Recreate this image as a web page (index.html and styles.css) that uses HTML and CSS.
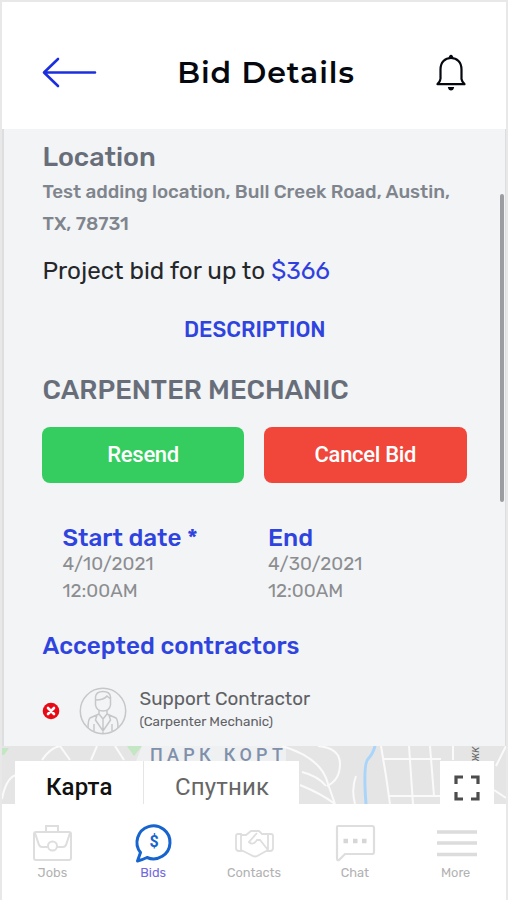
FILE: index.html
```html
<!DOCTYPE html>
<html lang="en">
<head>
<meta charset="utf-8">
<title>Bid Details</title>
<link rel="stylesheet" href="styles.css">
</head>
<body>
<div class="screen">
  <header class="topbar">
    <svg class="back" viewBox="0 0 56 32" width="56" height="32"><path d="M53 16.500H3M16 3L2 16.500L16 30" fill="none" stroke="#1b2fe0" stroke-width="2.600" stroke-linecap="round" stroke-linejoin="round"/></svg>
    <h1 class="title">Bid Details</h1>
    <svg class="bell" viewBox="0 0 34 40" width="34" height="40"><path d="M6.500 26V16.500C6.500 9 11 5 17 5S27.500 9 27.500 16.500V26Q28 29 30.500 31.200H3.500Q6 29 6.500 26" fill="none" stroke="#05080f" stroke-width="2.200" stroke-linejoin="round"/><path d="M14.500 5.500Q15 1.800 17 1.800T19.500 5.500ZM13.800 34H20.200Q19.500 37.500 17 37.500T13.800 34Z" fill="#05080f"/></svg>
  </header>

  <main class="panel">
    <h2 class="heading">Location</h2>
    <p class="address">Test adding location, Bull Creek Road, Austin,<br>TX, 78731</p>
    <p class="bid">Project bid for up to <span class="amount">$366</span></p>
    <h3 class="description">DESCRIPTION</h3>
    <h2 class="heading trade">CARPENTER MECHANIC</h2>
    <div class="actions">
      <button class="btn resend">Resend</button>
      <button class="btn cancel">Cancel Bid</button>
    </div>
    <div class="dates">
      <div class="date"><h3>Start date *</h3><p>4/10/2021</p><p>12:00AM</p></div>
      <div class="date"><h3>End</h3><p>4/30/2021</p><p>12:00AM</p></div>
    </div>
    <h3 class="accepted">Accepted contractors</h3>
    <div class="contractor">
      <svg class="remove" viewBox="0 0 18 18" width="18" height="18"><circle cx="9" cy="9" r="8.300" fill="#e90914"/><path d="M6 6L12 12M12 6L6 12" stroke="#fff" stroke-width="2.600" stroke-linecap="round"/></svg>
      <svg class="avatar" viewBox="0 0 48 48" width="48" height="48" fill="none" stroke="#c6c7c9" stroke-width="1.500"><circle cx="24" cy="24" r="22.700"/><path d="M16.500 13V10Q17 4.500 24 4.500T31.500 10V18Q30.500 24 24 24T16.500 18V13Q25 13 28 9L31.500 12M20 23V27L24 32L28 27V23M20 27L11 31Q9 33 9 41M28 27L37 31Q39 33 39 41M18 28L16.500 33L24 44L31.500 33L30 28M15 37V44M33 37V44M24 32V46"/></svg>
      <div class="who"><div class="name">Support Contractor</div><div class="role">(Carpenter Mechanic)</div></div>
    </div>
    <div class="scroll"></div>
  </main>

  <section class="map">
    <svg class="streets" viewBox="0 0 504 58" width="504" height="58" preserveAspectRatio="none">
      <path fill="#e5e5e5" d="M0 0H504V58H0Z"/>
      <path fill="#c3e6c3" d="M0 2H7L2 9H0ZM125 0H140L132 10Z"/>
      <path fill="#eef0f2" d="M140 0H284V15H134Z"/>
      <path fill="none" stroke="#fafafa" stroke-width="2" d="M0 53Q4 32 14 29M40 14Q48 2 58 0L68 14M95 0L89 14M113 0L122 14M280 0Q320 12 326 38L333 58M316 0Q338 2 338 18T325 40M300 26Q316 30 324 40M298 39Q320 48 333 58M354 30Q349 43 353 58M379 0L384 30L388 58M407 0L411 58M428 0L432 50M451 0V14M382 13H439M386 50H439M494 20L504 0M492 44L504 52"/>
      <path fill="none" stroke="#a9d5fb" stroke-width="3" d="M373 0Q371 8 366 13T364 58"/>
    </svg>
    <div class="park">ПАРК КОРТ</div>
    <div class="road">жк</div>
    <div class="controls">
      <div class="types"><div class="type active">Карта</div><div class="type sat">Спутник</div></div>
      <div class="full"><svg viewBox="0 0 26 26" width="26" height="26"><path d="M2 9V2H9M17 2H24V9M24 17V24H17M9 24H2V17" fill="none" stroke="#4d4d4d" stroke-width="3.200"/></svg></div>
    </div>
  </section>

  <nav class="tabs">
    <div class="tab"><svg viewBox="0 0 42 42" width="42" height="42" fill="none" stroke="#dedede" stroke-width="2"><rect x="3" y="10" width="37" height="28" rx="2"/><path d="M15 10V4H27V10M4 11L8 23Q9 25 11 25H17M39 11L35 23Q34 25 32 25H26"/><circle cx="21.500" cy="24" r="4.500"/></svg><span>Jobs</span></div>
    <div class="tab on"><svg viewBox="0 0 42 42" width="42" height="42"><path d="M5.500 39L8.500 30.500A16.500 16.500 0 1 1 15 35.500Q10 38 5.500 39Z" fill="none" stroke="#1764cf" stroke-width="3" stroke-linejoin="round"/><text x="22" y="25" class="dollar">$</text></svg><span>Bids</span></div>
    <div class="tab"><svg viewBox="0 0 42 42" width="42" height="42" fill="none" stroke="#dedede" stroke-width="1.800"><path d="M8 12H5Q3 12 3 14V26Q3 29 6 29H8ZM35 12H38Q40 12 40 14V26Q40 29 37 29H35ZM8 13H13L18 9H26L29 12H35M8 28L18 33Q22 36 26 33L35 28M24 11L16 20Q20 24 24 18H27L35 28"/></svg><span>Contacts</span></div>
    <div class="tab"><svg viewBox="0 0 42 42" width="42" height="42"><path d="M4 4H38Q40 4 40 6V30Q40 32 38 32H11L5 38Q3 39 3 36V5Q3 4 4 4Z" fill="none" stroke="#dedede" stroke-width="2.200"/><path d="M9.500 19H14M19 19H23.500M28 19H32.500" stroke="#d6d6d6" stroke-width="4.500"/></svg><span>Chat</span></div>
    <div class="tab"><svg viewBox="0 0 42 42" width="42" height="42"><path d="M2 10H42M2 21H42M2 32.500H42" stroke="#dcdcdc" stroke-width="3.600"/></svg><span>More</span></div>
  </nav>
</div>
</body>
</html>
```
FILE: styles.css
```css
* { box-sizing: border-box; margin: 0; padding: 0; }
body { background: #fff; font-family: Rubik, Roboto, "Liberation Sans", sans-serif; }
h1, h2, h3, button { font-weight: 500; }
.screen { position: relative; width: 508px; height: 900px; border: 2px solid #e8e8e8; border-bottom: 0; overflow: hidden; background: #fff; }
.topbar { height: 127px; display: flex; align-items: center; justify-content: space-between; padding: 14px 38px 0 40px; }
.title { font: 600 30px/40px "Montserrat", "Inter", sans-serif; letter-spacing: .98px; color: #05080f; }
.back { margin-top: -2px; }
.panel { position: relative; height: 617px; margin: 0 -2px; padding: 11px 38px 0 38.500px; background: #f2f4f6; border-left: 4px solid #dcdee0; border-right: 3px solid #dcdee0; white-space: nowrap; }
.heading { font-size: 26.900px; line-height: 34px; color: #686e79; }
.address { font-size: 18.850px; line-height: 32px; font-weight: 500; color: #80858d; padding-top: 2px; }
.bid { font-size: 24.250px; line-height: 32px; margin-top: 15px; color: #25272b; }
.amount { color: #3040df; }
.description { text-align: center; font-size: 21.500px; line-height: 28px; margin-top: 29px; color: #2f43df; }
.trade { margin-top: 29px; }
.actions { display: grid; grid-template-columns: 1fr 1fr; gap: 20px; margin: 20px .5px 0 -.5px; }
.btn { height: 56px; border: 0; border-radius: 8px; color: #fff; font: 500 22px/26px Roboto, sans-serif; letter-spacing: -.3px; }
.resend { background: #35cd5f; }
.cancel { background: #f1463a; }
.dates { display: grid; grid-template-columns: 205.500px 1fr; margin: 42px 0 0 20px; }
.date h3, .accepted { color: #2f43df; font-size: 24.250px; line-height: 26px; }
.date p { font-size: 18.800px; line-height: 27px; color: #8c8d90; }
.date h3 + p { margin-top: -1px; }
.accepted { margin-top: 29px; }
.contractor { display: flex; align-items: center; height: 52px; margin-top: 26px; }
.remove { margin-left: -1px; }
.avatar { margin-left: 19px; }
.who { margin-left: 13px; padding-bottom: 4px; color: #606165; }
.name { font-size: 18.850px; line-height: 24px; }
.role { font-size: 13.400px; line-height: 20px; color: #606165; }
.scroll { position: absolute; right: 1px; top: 65px; width: 4px; height: 308px; border-radius: 2px; background: #9c9da0; }
.map { position: relative; height: 58px; overflow: hidden; }
.streets { display: block; }
.park { position: absolute; left: 148px; top: 0; font: 500 18px/18px Roboto, sans-serif; letter-spacing: 4.300px; color: #8090aa; white-space: nowrap; }
.road { position: absolute; left: 465px; top: 0; font: italic 12px/16px Roboto, sans-serif; color: #6b6b6b; transform: rotate(-90deg); }
.controls { position: absolute; inset: 15px 12px 0 13px; display: flex; justify-content: space-between; }
.types { display: flex; width: 284px; background: #fff; }
.type { font: 400 24px/52px Roboto, sans-serif; color: #666; white-space: nowrap; letter-spacing: .15px; }
.active { width: 129px; padding-left: 31px; color: #111; font-weight: 500; border-right: 1px solid #e5e5e5; }
.sat { padding-left: 31px; }
.full { width: 54px; background: #fff; display: grid; place-items: center; padding-top: 10px; }
.tabs { display: flex; height: 96px; background: #fff; }
.tab { flex: 1; display: flex; flex-direction: column; align-items: center; padding-top: 18px; font-size: 12.800px; line-height: 17px; color: #b2b2b2; }
.on { color: #7269df; }
.dollar { font: 700 16px Roboto, sans-serif; fill: #1764cf; text-anchor: middle; }
```
